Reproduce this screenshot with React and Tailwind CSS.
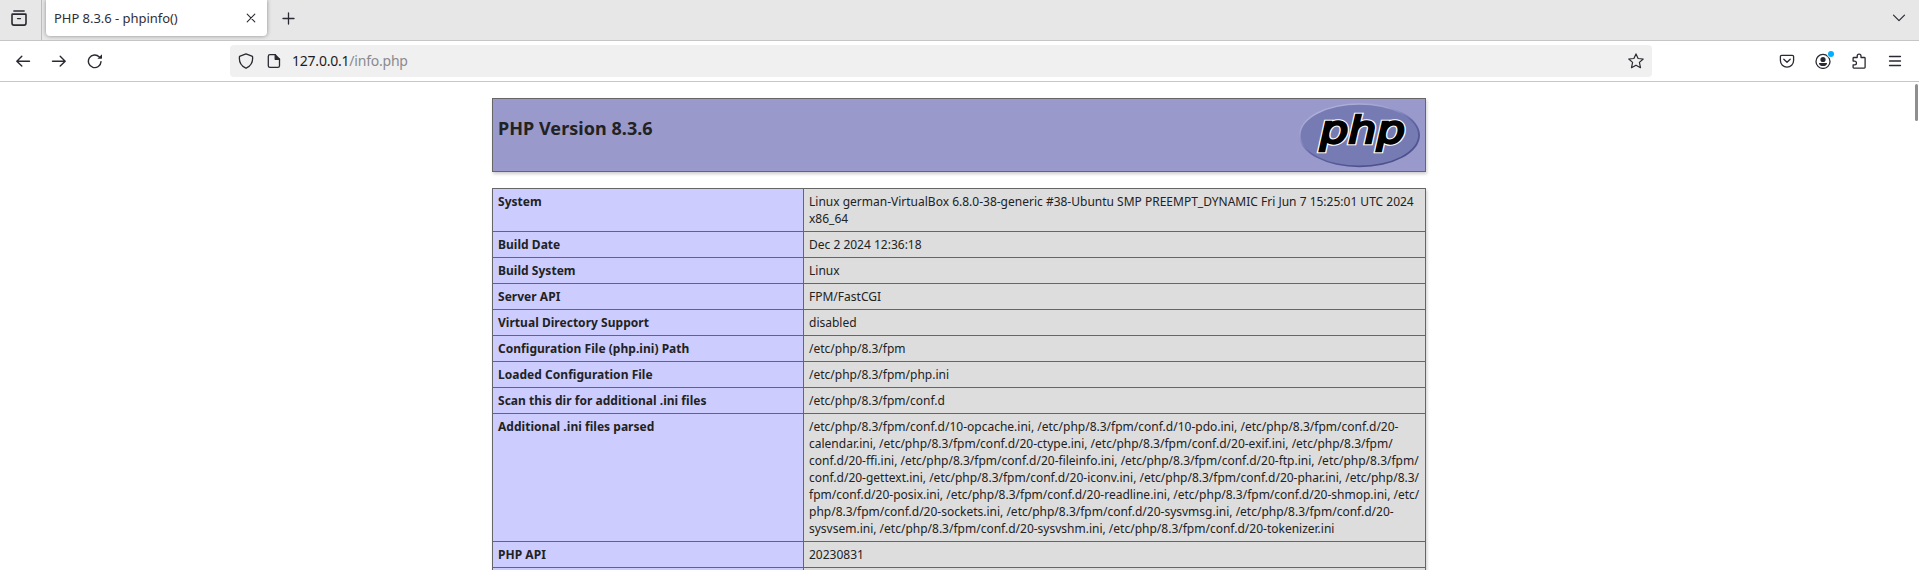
const rows = [
  ['System', ['Linux german-VirtualBox 6.8.0-38-generic #38-Ubuntu SMP PREEMPT_DYNAMIC Fri Jun 7 15:25:01 UTC 2024', 'x86_64']],
  ['Build Date', ['Dec 2 2024 12:36:18']],
  ['Build System', ['Linux']],
  ['Server API', ['FPM/FastCGI']],
  ['Virtual Directory Support', ['disabled']],
  ['Configuration File (php.ini) Path', ['/etc/php/8.3/fpm']],
  ['Loaded Configuration File', ['/etc/php/8.3/fpm/php.ini']],
  ['Scan this dir for additional .ini files', ['/etc/php/8.3/fpm/conf.d']],
  ['Additional .ini files parsed', [
    '/etc/php/8.3/fpm/conf.d/10-opcache.ini, /etc/php/8.3/fpm/conf.d/10-pdo.ini, /etc/php/8.3/fpm/conf.d/20-',
    'calendar.ini, /etc/php/8.3/fpm/conf.d/20-ctype.ini, /etc/php/8.3/fpm/conf.d/20-exif.ini, /etc/php/8.3/fpm/',
    'conf.d/20-ffi.ini, /etc/php/8.3/fpm/conf.d/20-fileinfo.ini, /etc/php/8.3/fpm/conf.d/20-ftp.ini, /etc/php/8.3/fpm/',
    'conf.d/20-gettext.ini, /etc/php/8.3/fpm/conf.d/20-iconv.ini, /etc/php/8.3/fpm/conf.d/20-phar.ini, /etc/php/8.3/',
    'fpm/conf.d/20-posix.ini, /etc/php/8.3/fpm/conf.d/20-readline.ini, /etc/php/8.3/fpm/conf.d/20-shmop.ini, /etc/',
    'php/8.3/fpm/conf.d/20-sockets.ini, /etc/php/8.3/fpm/conf.d/20-sysvmsg.ini, /etc/php/8.3/fpm/conf.d/20-',
    'sysvsem.ini, /etc/php/8.3/fpm/conf.d/20-sysvshm.ini, /etc/php/8.3/fpm/conf.d/20-tokenizer.ini',
  ]],
  ['PHP API', ['20230831']],
];

function Icon({ children, className = '' }) {
  return (
    <svg viewBox="0 0 16 16" width="16" height="16" fill="none" stroke="#2b2a33" strokeWidth="1.3" strokeLinecap="round" strokeLinejoin="round" className={`block shrink-0 ${className}`}>
      {children}
    </svg>
  );
}

function TabBar() {
  return (
    <div className="flex h-[41px] border-b border-[#c6c6c6] bg-[#e7e7e7]">
      <div className="flex w-[42px] border-r border-[#bdbdbd] pl-[11px] pt-[10px]">
        <Icon>
          <path d="M2.800 1h10.400" />
          <path d="M1 4.700c0-.4.200-.6.600-.6h12.800c.4 0 .6.200.6.600M1 4.700v8.300c0 1.300.7 2.100 1.900 2.100h10.200c1.200 0 1.900-.8 1.900-2.100V4.700" strokeWidth="1.6" />
          <path d="M6.500 8.600h3" />
        </Icon>
      </div>
      <div className="ml-1 flex h-9 w-[221px] items-center justify-between rounded-b-[4px] bg-white pl-2 pr-[11px] shadow-[0_0_4px_rgba(0,0,0,0.4)]">
        <span className="whitespace-nowrap text-[13px] leading-9 tracking-[-0.04px] text-[#2f2e38]">PHP 8.3.6 - phpinfo()</span>
        <svg width="10" height="10" viewBox="0 0 10 10" stroke="#2b2a33" strokeWidth="1.1" strokeLinecap="round">
          <path d="M1.200 1.200l7.600 7.600M8.800 1.200L1.200 8.800" />
        </svg>
      </div>
      <div className="ml-[15px] flex h-[37px] items-center">
        <svg width="13" height="13" viewBox="0 0 13 13" stroke="#2b2a33" strokeWidth="1.3" strokeLinecap="round">
          <path d="M6.500 1v11M1 6.500h11" />
        </svg>
      </div>
      <div className="ml-auto mr-[13px] flex h-[35px] items-center">
        <svg width="14" height="8" viewBox="0 0 14 8" fill="none" stroke="#2b2a33" strokeWidth="1.2" strokeLinecap="round" strokeLinejoin="round">
          <path d="M1.500 1.200L7 6.700l5.500-5.500" />
        </svg>
      </div>
    </div>
  );
}

function Toolbar() {
  return (
    <div className="flex h-[41px] items-center border-b border-[#c6c6c6] bg-white">
      <div className="flex w-[230px] items-center gap-5 pl-[15px]">
        <Icon><path d="M14.500 8.200H2M6.800 3.300L1.800 8.200l5 4.900" strokeWidth="1.4" /></Icon>
        <Icon><path d="M1.500 8.200H14M9.200 3.300l5 4.900-5 4.900" strokeWidth="1.4" /></Icon>
        <Icon>
          <path d="M14 8.600A6.300 6.300 0 1 1 12.300 4" strokeWidth="1.4" />
          <path d="M15 1.200v4.100c0 .3-.2.500-.5.500h-4.100z" fill="#2b2a33" stroke="none" />
        </Icon>
      </div>
      <div className="flex h-8 w-[1422px] items-center rounded-[4px] bg-[#f0f0f0] pl-2">
        <Icon><path d="M8 .9l5.900 2.200c.5.200.7.500.7 1v1.700c0 4.200-2.600 7.400-6 9.100-.4.200-.8.200-1.200 0-3.400-1.700-6-4.900-6-9.100V4.100c0-.5.2-.8.7-1z" /></Icon>
        <Icon className="ml-3">
          <path d="M9.300 1.700H4A1.700 1.700 0 0 0 2.300 3.400v9.300A1.700 1.700 0 0 0 4 14.400h7.800a1.700 1.700 0 0 0 1.700-1.700V6" />
          <path d="M9.200 1.700v4.600h4.300z" fill="#2b2a33" />
        </Icon>
        <span className="mb-0.5 ml-[10px] whitespace-nowrap text-[14px] tracking-[-0.22px] text-[#1d1c22]">127.0.0.1<span className="text-[#8a8a8f]">/info.php</span></span>
        <Icon className="ml-auto mr-2"><path d="M8 .9l2.100 4.600 5.100.5-3.800 3.400 1.100 5.300L8 12.200l-4.500 2.500 1.100-5.300L.8 6l5.100-.5z" strokeWidth="1.2" /></Icon>
      </div>
      <div className="ml-[127px] flex items-center gap-5">
        <Icon>
          <path d="M2.700 2.300h10.600c.8 0 1.300.5 1.300 1.300v4a6.600 6.600 0 0 1-13.200 0v-4c0-.8.5-1.300 1.300-1.300z" />
          <path d="M4.800 6.200L8 9.200l3.200-3" />
        </Icon>
        <div className="relative">
          <Icon>
            <circle cx="8" cy="8.400" r="7" />
            <circle cx="8" cy="6.500" r="2.600" fill="#2b2a33" stroke="none" />
            <path d="M4 9.900h8c.3 1.600-1.700 3.200-4 3.200s-4.300-1.600-4-3.200z" fill="#2b2a33" stroke="none" />
          </Icon>
          <span className="absolute -right-[3px] -top-[2px] size-[6px] rounded-full bg-[#00b0ff] ring-1 ring-white/70" />
        </div>
        <Icon><path d="M2.100 8.100V5.300c0-.5.300-.8.800-.8h3.300V3a1.900 1.900 0 0 1 3.800 0v1.500h3.300c.5 0 .8.300.8.800v9c0 .5-.3.800-.8.800H2.900c-.5 0-.8-.3-.8-.8v-2.500h1.500a1.800 1.800 0 0 0 0-3.700z" /></Icon>
        <Icon><path d="M2.500 3.500h11M2.500 8h11M2.500 12.500h11" /></Icon>
      </div>
    </div>
  );
}

function PhpLogo() {
  return (
    <svg width="121" height="65" viewBox="0 0 121 65" className="block" fontFamily="DejaVu Sans" fontStyle="italic" fontSize="38">
      <defs>
        <linearGradient id="rim" x1="0.15" y1="0" x2="0.75" y2="1">
          <stop offset="0" stopColor="#b4b6dd" />
          <stop offset="0.3" stopColor="#a0a2d0" />
          <stop offset="0.55" stopColor="#6064a4" />
          <stop offset="1" stopColor="#484c89" />
        </linearGradient>
      </defs>
      <ellipse cx="60.500" cy="32.200" rx="60.500" ry="32" fill="url(#rim)" />
      <ellipse cx="60.300" cy="32.200" rx="58.800" ry="30.400" fill="#777bb3" />
      <text x="21" y="40.200" textLength="85" lengthAdjust="spacingAndGlyphs" fill="#fff" stroke="#fff" strokeWidth="4.600">php</text>
      <text x="21" y="40.200" textLength="85" lengthAdjust="spacingAndGlyphs" fill="#000" stroke="#000" strokeWidth="2.400">php</text>
    </svg>
  );
}

export default function App() {
  return (
    <div className="flex h-[570px] w-full flex-col overflow-hidden bg-white font-['Noto_Sans','Open_Sans',sans-serif] text-[#222]">
      <TabBar />
      <Toolbar />
      <div className="flex min-h-0 flex-1 items-start overflow-hidden">
        <main className="ml-[492px] w-[934px] pt-4">
          <header className="flex h-[74px] items-start justify-between border border-[#666] bg-[#9999cc] pl-[5px] pr-[5px] pt-1 shadow-[1px_2px_3px_rgba(0,0,0,0.2)]">
            <h1 className="pt-[13px] text-[18px] font-bold leading-[25px] tracking-[0.04px]">PHP Version 8.3.6</h1>
            <PhpLogo />
          </header>
          <table className="mt-4 w-[934px] table-fixed border-collapse text-[12px] leading-[17px] shadow-[1px_2px_3px_rgba(0,0,0,0.2)]">
            <colgroup>
              <col className="w-[311px]" />
              <col />
            </colgroup>
            <tbody>
              {rows.map(([label, lines]) => (
                <tr key={label}>
                  <td className="border border-[#666] bg-[#ccccff] px-[5px] py-1 align-top font-bold tracking-[0.03px]">{label}</td>
                  <td className="border border-[#666] bg-[#dddddd] px-[5px] py-1 align-top">
                    {lines.map((line) => (
                      <div key={line} className="whitespace-nowrap">{line}</div>
                    ))}
                  </td>
                </tr>
              ))}
              <tr className="h-[26px]">
                <td className="border border-[#666] bg-[#ccccff]" />
                <td className="border border-[#666] bg-[#dddddd]" />
              </tr>
            </tbody>
          </table>
        </main>
        <div className="ml-auto mr-px mt-[2px] h-[37px] w-[3px] rounded-full bg-[#8f8f8f]" />
      </div>
    </div>
  );
}
